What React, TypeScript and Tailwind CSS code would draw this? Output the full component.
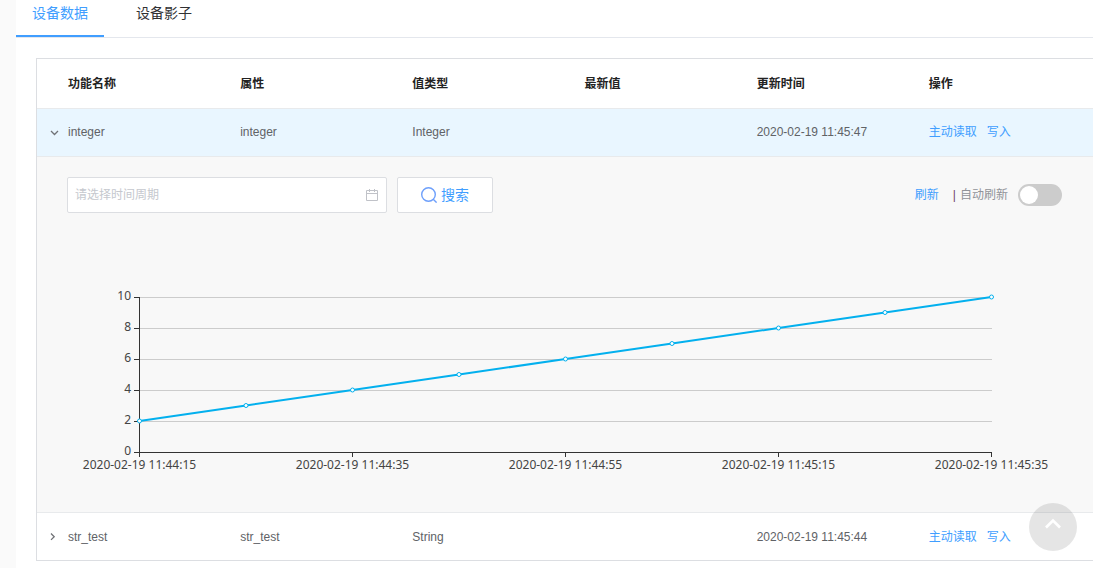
import { useState } from "react";

type Row = { name: string; property: string; type: string; latest: string; updated: string };

const HEADERS = ["功能名称", "属性", "值类型", "最新值", "更新时间", "操作"];

const ROWS: Row[] = [
  { name: "integer", property: "integer", type: "Integer", latest: "", updated: "2020-02-19 11:45:47" },
  { name: "str_test", property: "str_test", type: "String", latest: "", updated: "2020-02-19 11:45:44" },
];

const VALUES = [2, 3, 4, 5, 6, 7, 8, 9, 10];
const TIMES = [
  "2020-02-19 11:44:15",
  "2020-02-19 11:44:35",
  "2020-02-19 11:44:55",
  "2020-02-19 11:45:15",
  "2020-02-19 11:45:35",
];

function Chart() {
  const points = VALUES.map((v, i) => ({ x: 72.5 + i * 106.5, y: 239 - v * 15.5 }));
  return (
    <svg viewBox="0 0 995 299" className="block w-full font-['Noto_Sans',sans-serif]" role="img" aria-label="integer">
      {[2, 4, 6, 8, 10].map((v) => (
        <line key={v} x1="73" x2="925" y1={239.5 - v * 15.5} y2={239.5 - v * 15.5} stroke="#ccc" />
      ))}
      <path d="M72.5 84V244M67 239.5H925" stroke="#333" fill="none" />
      {[0, 2, 4, 6, 8, 10].map((v) => (
        <g key={v}>
          <line x1="67" x2="73" y1={239.5 - v * 15.5} y2={239.5 - v * 15.5} stroke="#333" />
          <text x="64" y={242 - v * 15.5} textAnchor="end" fontSize="12" fill="#444">
            {v}
          </text>
        </g>
      ))}
      {TIMES.map((t, i) => (
        <g key={t}>
          <line x1={72.5 + i * 213} x2={72.5 + i * 213} y1="239" y2="244" stroke="#333" />
          <text x={72.5 + i * 213} y="256" textAnchor="middle" fontSize="12" fill="#444">
            {t}
          </text>
        </g>
      ))}
      <polyline points={points.map((p) => `${p.x},${p.y}`).join(" ")} fill="none" stroke="#03b0ee" strokeWidth="2" />
      {points.map((p) => (
        <circle key={p.x} cx={p.x} cy={p.y} r="2" fill="#fff" stroke="#03b0ee" strokeWidth="1" />
      ))}
    </svg>
  );
}

function HistoryPanel() {
  const [auto, setAuto] = useState(false);
  return (
    <div className="bg-[#f8f8f8] pt-5 pr-[39px] pl-[30px]">
      <div className="flex items-center justify-between">
        <div className="flex gap-2.5">
          <label className="flex h-9 w-80 items-center rounded-xs border border-[#dcdee2] bg-white px-[7px]">
            <input
              aria-label="时间周期"
              placeholder="请选择时间周期"
              className="min-w-0 flex-1 text-xs outline-none placeholder:text-[#c5c8ce]"
            />
            <svg viewBox="0 0 14 14" className="size-3.5" fill="none" stroke="#c0c2c8">
              <path d="M1.5 2.5H12.5V12.5H1.5ZM1.5 5.5H12.5M4.5 1V4M9.5 1V4" />
            </svg>
          </label>
          <button className="flex h-9 w-24 items-center justify-center gap-1 rounded-xs border border-[#dcdee2] bg-white text-sm text-[#409eff]">
            <svg viewBox="0 0 16 16" className="size-4" fill="none" stroke="#6d9ffb" strokeWidth="1.4">
              <circle cx="7.5" cy="7.5" r="6.8" />
              <path d="M12.2 12.2L15.6 15.6" />
            </svg>
            搜索
          </button>
        </div>
        <div className="flex items-center text-xs text-[#909399]">
          <button className="mr-3.5 text-[#409eff]">刷新</button>
          <span className="mr-1 text-[#71406f]">|</span>
          <label htmlFor="auto-refresh" className="mr-2.5">
            自动刷新
          </label>
          <input
            id="auto-refresh"
            type="checkbox"
            role="switch"
            checked={auto}
            onChange={(e) => setAuto(e.target.checked)}
            className="flex h-[22px] w-11 cursor-pointer appearance-none items-center rounded-full bg-[#ccc] px-0.5 before:size-[18px] before:rounded-full before:bg-white checked:justify-end checked:bg-[#409eff]"
          />
        </div>
      </div>
      <Chart />
    </div>
  );
}

export default function App() {
  const [tab, setTab] = useState(0);
  const [open, setOpen] = useState<string | null>("integer");
  return (
    <div className="min-h-screen overflow-x-hidden bg-[#fafafa] pl-4 font-['Liberation_Sans','Noto_Sans_CJK_SC',sans-serif]">
      <main className="min-h-screen bg-white">
        <div role="tablist" className="flex gap-4 border-b border-[#e4e7ed]">
          {["设备数据", "设备影子"].map((label, i) => (
            <button
              key={label}
              role="tab"
              aria-selected={tab === i}
              onClick={() => setTab(i)}
              className={
                tab === i
                  ? "border-b-2 border-[#409eff] px-4 pt-1 pb-3 text-sm leading-[19px] text-[#409eff]"
                  : "border-b-2 border-transparent px-4 pt-1 pb-3 text-sm leading-[19px] text-[#303133]"
              }
            >
              {label}
            </button>
          ))}
        </div>
        <section className="mt-5 -mr-[9px] ml-5 border border-[#dcdee2]">
          <table className="w-full table-fixed border-separate border-spacing-0 text-left text-xs text-[#606266]">
            <thead>
              <tr className="h-[50px] text-[#222]">
                <th className="w-[31px] border-b border-[#e8eaec]" />
                {HEADERS.map((h) => (
                  <th key={h} className="border-b border-[#e8eaec] pt-px font-bold">
                    {h}
                  </th>
                ))}
              </tr>
            </thead>
            {ROWS.map((row, i) => {
              const expanded = open === row.name;
              const line = i < ROWS.length - 1 || expanded ? "border-b border-[#e8eaec] pb-px" : "";
              return (
                <tbody key={row.name}>
                  <tr className={expanded ? "h-12 bg-[#e9f6ff]" : "h-[47px]"}>
                    <td className={line}>
                      <button
                        aria-label={row.name}
                        aria-expanded={expanded}
                        onClick={() => setOpen(expanded ? null : row.name)}
                        className="ml-2.5 flex size-3.5 items-center justify-center"
                      >
                        <svg viewBox="0 0 10 10" className="size-2.5" fill="none" stroke="#707276" strokeWidth="1.3">
                          <path d={expanded ? "M2 4L5.5 7.5L9 4" : "M2 1.5L5.2 4.7L2 7.9"} />
                        </svg>
                      </button>
                    </td>
                    <td className={line}>{row.name}</td>
                    <td className={line}>{row.property}</td>
                    <td className={line}>{row.type}</td>
                    <td className={line}>{row.latest}</td>
                    <td className={line}>{row.updated}</td>
                    <td className={line}>
                      <div className="flex gap-2.5 text-[#409eff]">
                        <a href="#read">主动读取</a>
                        <a href="#write">写入</a>
                      </div>
                    </td>
                  </tr>
                  {expanded && (
                    <tr>
                      <td colSpan={7} className="border-b border-[#e8eaec] p-0">
                        <HistoryPanel />
                      </td>
                    </tr>
                  )}
                </tbody>
              );
            })}
          </table>
        </section>
      </main>
      <button
        aria-label="回到顶部"
        className="fixed right-4 bottom-[17px] flex size-12 items-center justify-center rounded-full bg-black/10"
      >
        <svg viewBox="0 0 16 16" className="mb-1.5 size-4" fill="none" stroke="#fff" strokeWidth="2.6">
          <path d="M1 11.5L8 4.5L15 11.5" />
        </svg>
      </button>
    </div>
  );
}
